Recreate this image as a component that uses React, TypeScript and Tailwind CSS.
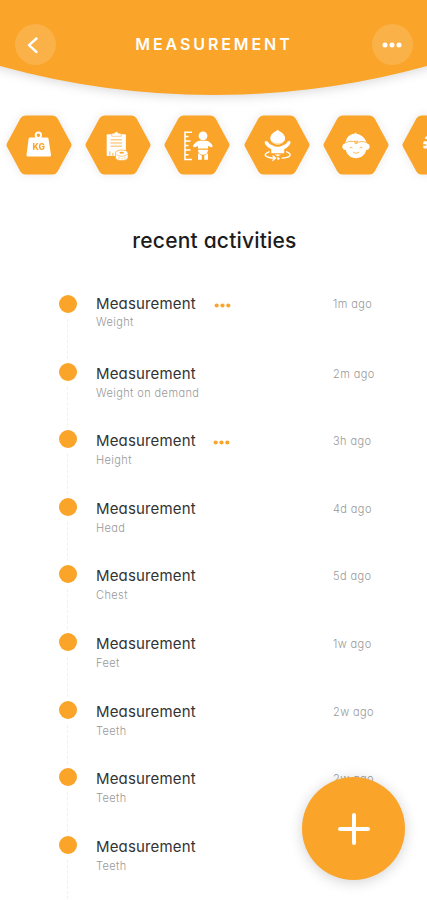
import React from 'react'

interface Activity {
  title: string
  detail: string
  time: string
  hasMenu?: boolean
}

const activities: Activity[] = [
  { title: 'Measurement', detail: 'Weight', time: '1m ago', hasMenu: true },
  { title: 'Measurement', detail: 'Weight on demand', time: '2m ago' },
  { title: 'Measurement', detail: 'Height', time: '3h ago', hasMenu: true },
  { title: 'Measurement', detail: 'Head', time: '4d ago' },
  { title: 'Measurement', detail: 'Chest', time: '5d ago' },
  { title: 'Measurement', detail: 'Feet', time: '1w ago' },
  { title: 'Measurement', detail: 'Teeth', time: '2w ago' },
  { title: 'Measurement', detail: 'Teeth', time: '2w ago' },
  { title: 'Measurement', detail: 'Teeth', time: '' },
]

const WeightIcon = () => (
  <g>
    <circle cx="32.4" cy="20.2" r="2.7" fill="none" stroke="white" strokeWidth="1.9" />
    <path d="M24 22.5h17a1.5 1.5 0 0 1 1.5 1.2L45 40a1.3 1.3 0 0 1-1.3 1.5H21.8A1.3 1.3 0 0 1 20.5 40l2.1-16.3a1.5 1.5 0 0 1 1.4-1.2z" fill="white" />
    <text x="32.7" y="35.4" fontSize="8.5" fontWeight="800" textAnchor="middle" fill="#faa429">
      KG
    </text>
  </g>
)

const ClipboardIcon = () => (
  <g>
    <path d="M22.7 19.2h17.2a1 1 0 0 1 1 1V41h-18.2a1 1 0 0 1-1-1V20.2a1 1 0 0 1 1-1z" fill="white" />
    <path d="M26.7 21.3v-2.1a1 1 0 0 1 1-1h1.8a2 2 0 0 1 3.8 0h1.8a1 1 0 0 1 1 1v2.1z" fill="white" stroke="#faa429" strokeWidth="0.5" />
    <path d="M25.5 24.8h11.5M25.500 28h11.5M25.500 31.200h11.500M24.800 40.800v-4.500M27.800 40.800v-3" stroke="#faa429" strokeWidth="0.8" />
    <path d="M30.400 38c0-4 12.600-4 12.600 0v4.400c0 4.300-12.600 4.300-12.600 0z" fill="white" stroke="#faa429" strokeWidth="0.7" />
    <path d="M31.500 39.200c2 2.800 8.500 2.800 10.400 0M34 42.200v1.600M37 42.800v1.600M40 42.200v1.600" fill="none" stroke="#faa429" strokeWidth="0.6" />
    <ellipse cx="36.700" cy="37.700" rx="2.300" ry="0.9" fill="#faa429" />
  </g>
)

const HeightIcon = () => (
  <g>
    <path
      d="M28 17.200h-7v27.300h7M21 21.500h3.500M21 26h5.500M21 30.500h3.500M21 35h5.500M21 39.700h3.500"
      fill="none"
      stroke="white"
      strokeWidth="1.600"
    />
    <circle cx="39" cy="20.800" r="4.400" fill="white" />
    <path
      d="M35.700 25.700h6.600c2.400 0 6.300 3.800 6.300 5.200 0 1.500-1.600 1.700-4.600.2v2.300H34v-2.300c-3 1.500-4.900 1.300-4.900-.2 0-1.400 4.200-5.200 6.600-5.200z"
      fill="white"
    />
    <path d="M34 34.700h10c0 3-1.800 5-5 5s-5-2-5-5z" fill="white" />
    <path d="M34 38.200l3.800 2.600v3.900H34zM44 38.200l-3.800 2.600v3.900H44z" fill="white" />
  </g>
)

const ChestIcon = () => (
  <g>
    <path d="M33.500 14.600c.8 1.400 3 1.900 4.700 3.300 1.800 1.500 2.900 3.200 2.900 5.400 0 3.700-3.300 6.300-7.400 6.300s-7.400-2.600-7.400-6.300c0-2.200 1-4.200 3.100-5.600 1.700-1.100 3.500-1.600 4.100-3.100z" fill="white" />
    <path
      d="M20.800 26.500c1.500-1.100 2.900-.2 3.800 1.300 1 1.500 2 2 3.400 2.100 3 2.400 8.400 2.400 11.400 0 1.400-.1 2.400-.6 3.400-2.100.9-1.500 2.100-2.400 3.600-1.300.7 2.600-2.800 6.500-6.200 7.500v4.300H27.200V34c-3.400-1-7.100-4.900-6.400-7.500z"
      fill="white"
    />
    <path d="M27.500 26.200c3 3.600 9.600 3.600 12.600 0" fill="none" stroke="#faa429" strokeWidth="0.5" />
    <path
      d="M25 36.800c-8 3.400-2 6.100 5.500 6.300M42.600 36.800c7.500 3.100 2 6.100-4.500 6.300M29 41l2.500 2.100-2.700 2.100"
      fill="none"
      stroke="white"
      strokeWidth="1.400"
      strokeLinecap="round"
    />
    <path d="M30.500 39.500h6.500l-3.200 2z" fill="white" />
    <circle cx="34.300" cy="43.600" r="1.300" fill="white" />
  </g>
)

const HeadIcon = () => (
  <g>
    <path
      d="M32.300 17.200c.4 1.500 2.500 1.500 4.500 2.500 4 1.900 6.300 5.300 6.800 8.600 2.100.4 3.100 2 3.100 3.500 0 1.900-1.400 3.200-3.400 3.300-1.300 5-5.400 8.200-10.300 8.200s-9-3.200-10.300-8.200c-2-.1-3.400-1.400-3.400-3.300 0-1.500 1-3.100 3.100-3.500.6-5.800 4.300-8.800 8.600-9.500.7-.1 1.100-.7 1.300-1.600z"
      fill="white"
    />
    <path
      d="M23.500 27.300c3-1.900 6-1 9.500-.3 3.500.7 6.500-1.600 9.500.3M32 25.800v2.600h2.200v-2.600M26.700 33c.6-1.100 2-1.100 2.500 0M36.800 33c.6-1.100 2-1.100 2.500 0M30.300 37.200c1.600 1.400 4.100 1.400 5.700 0"
      fill="none"
      stroke="#faa429"
      strokeWidth="0.8"
      strokeLinecap="round"
    />
  </g>
)

const FeetIcon = () => (
  <g fill="white">
    <circle cx="24.500" cy="22.800" r="1.500" />
    <path d="M22.500 26.300h6v7.200h-6a1.200 1.200 0 0 1-1.200-1.200v-1.600h3v-1.400h-3v-1.800a1.200 1.200 0 0 1 1.200-1.200z" />
  </g>
)

const categories = [WeightIcon, ClipboardIcon, HeightIcon, ChestIcon, HeadIcon, FeetIcon]

const Dots = ({ className }: { className: string }) => (
  <svg viewBox="0 0 20 6" className={className} fill="currentColor">
    <circle cx="3" cy="3" r="2.500" />
    <circle cx="10" cy="3" r="2.500" />
    <circle cx="17" cy="3" r="2.500" />
  </svg>
)

const Header = () => (
  <header className="relative h-[115px] shrink-0">
    <svg
      viewBox="0 0 427 115"
      className="absolute inset-0 w-full h-full overflow-visible drop-shadow-[0_3px_5px_rgba(0,0,0,0.13)]"
    >
      <path d="M-20 -20H447V59.500L427 66A800 800 0 0 1 0 66L-20 59.500Z" fill="#faa429" />
    </svg>
    <div className="relative flex items-center justify-between pl-[15px] pr-[14px] pt-6 text-white">
      <button className="size-[41px] rounded-full bg-white/15 flex items-center justify-center">
        <svg width="16" height="20" viewBox="0 0 16 20" fill="none" stroke="white" strokeWidth="2.400" strokeLinecap="round" strokeLinejoin="round" className="-translate-x-0.5">
          <path d="M10.500 3.500L3 10.200L10.500 17" />
        </svg>
      </button>
      <h1 className="-mt-px text-[16px] leading-5 font-semibold tracking-[2.900px]">MEASUREMENT</h1>
      <button className="size-[41px] rounded-full bg-white/15 flex items-center justify-center">
        <Dots className="w-[20px] h-[6px]" />
      </button>
    </div>
  </header>
)

const App = () => {
  return (
    <div className="relative w-[427px] h-[900px] overflow-hidden bg-white flex flex-col font-['Inter','Noto_Sans',sans-serif] [font-feature-settings:'cv11']">
      <Header />

      <div className="flex gap-[13.200px] pl-[6px] shrink-0">
        {categories.map((Icon, index) => (
          <svg
            key={index}
            viewBox="0 0 66 60"
            className="w-[66px] h-[60px] shrink-0 overflow-visible drop-shadow-[0_0_5px_rgba(0,0,0,0.09)]"
          >
            <path
              d="M19.500 3.500H46.500Q48 3.500 49 5L62.500 30L49 55Q48 56.500 46.500 56.500H19.500Q18 56.500 17 55L3.500 30L17 5Q18 3.500 19.500 3.500Z"
              fill="#faa429"
              stroke="#faa429"
              strokeWidth="6"
              strokeLinejoin="round"
            />
            <Icon />
          </svg>
        ))}
      </div>

      <h2 className="mt-[52px] pl-[2px] text-center text-[21px] leading-7 font-medium tracking-[0.200px] text-[#1c1c1c]">
        recent activities
      </h2>

      <ul className="mt-10 flex flex-col">
        {activities.map((activity, index) => (
          <li key={index} className="flex h-[67.600px] shrink-0 pl-[58px]">
            <div className="flex flex-col items-center w-[19px] shrink-0">
              <span className="size-[18px] shrink-0 rounded-full bg-[#faa429]" />
              <span className="mt-1.5 mb-1 flex-1 border-l border-dashed border-[#f0f0f0]" />
            </div>
            <div className={`ml-[19px] w-[237px] shrink-0 ${index === 0 ? '-mt-px' : 'mt-px'}`}>
              <div className="flex items-center h-5">
                <span className="w-[101px] text-[15px] leading-5 tracking-[0.150px] text-[#333]">
                  {activity.title}
                </span>
                {activity.hasMenu && (
                  <Dots className={`mt-[2px] w-[17px] h-[5px] text-[#faa429] ${index === 0 ? 'ml-[17px]' : 'ml-4'}`} />
                )}
              </div>
              <p className={`text-[11px] leading-4 font-light tracking-[0.400px] text-[#999] ${index === 0 ? '' : 'mt-px'}`}>
                {activity.detail}
              </p>
            </div>
            <span
              className={`text-[11px] leading-5 font-light tracking-[0.400px] text-[#999] ${index === 0 ? '-mt-px' : 'mt-px'}`}
            >
              {activity.time}
            </span>
          </li>
        ))}
      </ul>

      <button className="absolute left-[302px] top-[777px] size-[103px] rounded-full bg-[#faa429] flex items-center justify-center shadow-[0_2px_14px_rgba(0,0,0,0.18)]">
        <svg width="34" height="34" viewBox="0 0 34 34" stroke="white" strokeWidth="4" strokeLinecap="round">
          <path d="M17 3V31M3 17H31" />
        </svg>
      </button>
    </div>
  )
}

export default App
